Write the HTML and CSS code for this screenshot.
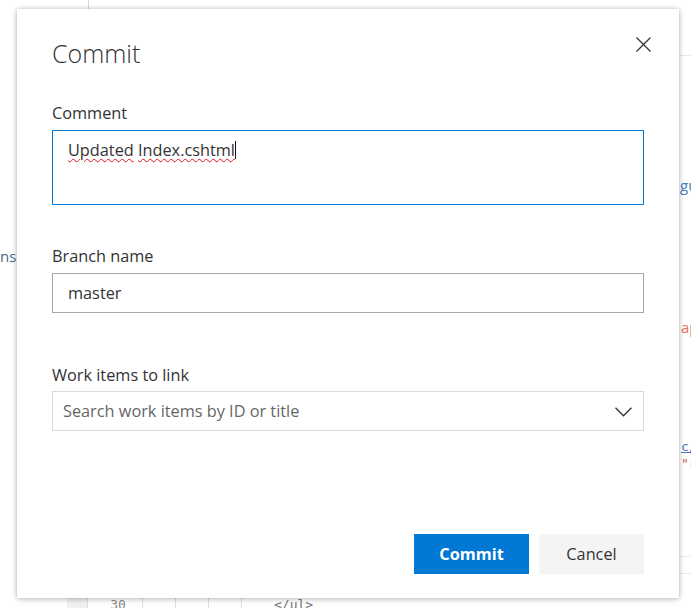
FILE: index.html
```html
<!DOCTYPE html>
<html>
<head>
<meta charset="utf-8">
<link rel="stylesheet" href="styles.css">
</head>
<body>
<div class="page">
  <div class="bg">
    <span class="bg-vline v1"></span>
    <span class="bg-hline h1"></span>
    <span class="bg-hline h2"></span>
    <span class="bg-hline h3"></span>
    <span class="bg-text t-ns">ns</span>
    <span class="bg-text t-gu">gu</span>
    <span class="bg-text t-ap">ap</span>
    <span class="bg-text t-c">c/</span>
    <span class="bg-text t-r">"r</span>
    <div class="bg-code">
      <span class="gutter"></span>
      <span class="cell num">30</span>
      <span class="cell"></span>
      <span class="cell"></span>
      <span class="cell"></span>
      <span class="code">&lt;/ul&gt;</span>
    </div>
  </div>

  <div class="dialog">
    <div class="dialog-head">
      <h1 class="title">Commit</h1>
      <button class="close" aria-label="Close">
        <svg width="15" height="15" viewBox="0 0 15 15"><path d="M0.5 0.5 L14.5 14.5 M14.5 0.5 L0.5 14.5" stroke="#333" stroke-width="1.3" fill="none"/></svg>
      </button>
    </div>

    <label class="label first">Comment</label>
    <div class="textarea"><span class="spell">Updated</span> <span class="spell">Index.cshtml</span><span class="caret"></span></div>

    <label class="label gap-branch">Branch name</label>
    <div class="input">master</div>

    <label class="label gap-work">Work items to link</label>
    <div class="dropdown">
      <span class="placeholder">Search work items by ID or title</span>
      <svg class="chev" width="17" height="10" viewBox="0 0 17 10"><path d="M0.5 0.8 L8.5 8.8 L16.5 0.8" stroke="#333" stroke-width="1.3" fill="none"/></svg>
    </div>

    <div class="actions">
      <button class="btn primary">Commit</button>
      <button class="btn secondary">Cancel</button>
    </div>
  </div>
</div>
</body>
</html>
```

FILE: styles.css
```css
* { box-sizing: border-box; }
html, body { margin: 0; padding: 0; background: #fff; }
body { font-family: "Open Sans", "Noto Sans", sans-serif; color: #333; }

.page { position: relative; width: 691px; height: 608px; overflow: hidden; }

.bg { position: absolute; inset: 0; }
.bg-vline { position: absolute; width: 1px; background: #d6d6d6; }
.v1 { left: 88px; top: 0; height: 9px; }
.bg-hline { position: absolute; height: 1px; background: #e8e8e8; left: 679px; width: 12px; }
.h1 { top: 55px; }
.h2 { top: 556px; }
.h3 { top: 573px; }
.bg-text { position: absolute; font-size: 15px; line-height: 18px; white-space: nowrap; }
.t-ns { left: 0; top: 247px; color: #4d6a8a; }
.t-gu { left: 680px; top: 176px; color: #4a7bbd; }
.t-ap { left: 681px; top: 318px; color: #e8706a; }
.t-c { left: 681px; top: 438px; color: #4a7bbd; text-decoration: underline; font-family: "DejaVu Sans Mono", monospace; font-size: 13px; }
.t-r { left: 681px; top: 455px; color: #c45a50; font-family: "DejaVu Sans Mono", monospace; font-size: 13px; }

.bg-code { position: absolute; left: 67px; top: 598px; height: 10px; display: flex; font-family: "DejaVu Sans Mono", monospace; font-size: 13px; color: #888; line-height: 20px; }
.gutter { width: 21px; background: #f1f1f1; border-right: 1px solid #ddd; }
.cell { width: 33px; border-right: 1px solid #e2e2e2; }
.cell.num { width: 55px; text-align: center; padding-left: 6px; line-height: 14px; }
.code { padding-left: 32px; line-height: 14px; color: #777; }

.dialog {
  position: absolute; left: 17px; top: 9px; width: 662px; height: 589px;
  background: #fff;
  box-shadow: 0 0 5px rgba(0,0,0,0.22), 0 2px 6px rgba(0,0,0,0.12);
  padding: 27px 35px 0 35px;
  display: flex; flex-direction: column;
}

.dialog-head { display: flex; justify-content: space-between; align-items: flex-start; height: 34px; }
.title { margin: 0; font-weight: 300; font-size: 25px; line-height: 34px; color: #333; letter-spacing: 0; }
.close { border: 0; background: none; padding: 0; margin: 1px -7px 0 0; width: 15px; height: 15px; display: block; }
.close svg { display: block; }

.label { display: block; font-size: 16.3px; line-height: 20px; color: #333; margin-top: 42px; margin-bottom: 7px; }
.label.first { margin-top: 33px; }
.gap-branch { margin-top: 41px; }
.gap-work { margin-top: 52px; margin-bottom: 6px; }

.textarea {
  height: 75px; border: 1px solid #0078d4; padding: 9px 15px 0; font-size: 16.3px; line-height: 20px; color: #333;
}
.spell { text-decoration: underline wavy #e81123; text-decoration-thickness: 1px; text-underline-offset: 2px; }
.caret { display: inline-block; width: 1px; height: 18px; background: #111; vertical-align: -3px; margin-left: 0; }

.input {
  height: 40px; border: 1px solid #a6a6a6; padding: 0 15px; font-size: 16.3px; line-height: 38px; color: #333;
}

.dropdown {
  height: 40px; border: 1px solid #dadada; padding: 0 11px 0 10px; display: flex; align-items: center; justify-content: space-between;
}
.placeholder { font-size: 16.3px; color: #666; line-height: 38px; }
.chev { display: block; margin-top: 2px; }

.actions { display: flex; justify-content: flex-end; gap: 10px; margin-top: 103px; }
.btn { height: 40px; border: 0; font-family: "Open Sans", "Noto Sans", sans-serif; font-size: 16.3px; padding: 0; }
.primary { width: 115px; background: #0078d4; color: #fff; font-weight: 700; }
.secondary { width: 105px; background: #f4f4f4; color: #333; }
```
